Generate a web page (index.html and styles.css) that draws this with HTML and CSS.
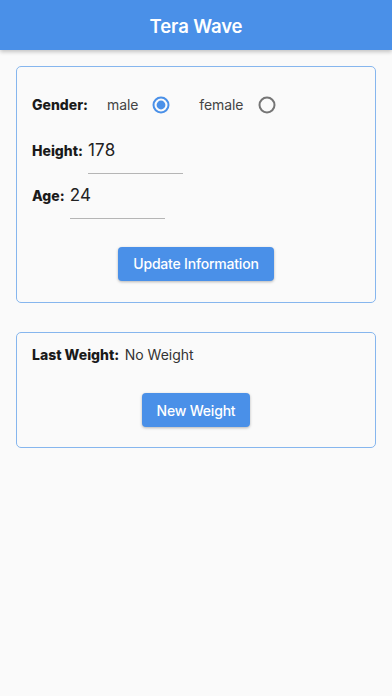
FILE: index.html
```html
<!DOCTYPE html>
<html lang="en">
<head>
<meta charset="utf-8">
<meta name="viewport" content="width=device-width, initial-scale=1">
<title>Tera Wave</title>
<link rel="stylesheet" href="styles.css">
</head>
<body>
  <header class="appbar">
    <h1 class="appbar-title">Tera Wave</h1>
  </header>
  <main class="content">
    <section class="card card-info">
      <div class="gender-row">
        <span class="label">Gender:</span>
        <span class="option-text option-male">male</span>
        <svg class="radio" width="18" height="18" viewBox="0 0 18 18" aria-hidden="true">
          <circle cx="9" cy="9" r="7.5" fill="none" stroke="#4a90e8" stroke-width="2"/>
          <circle cx="9" cy="9" r="4.4" fill="#4a90e8"/>
        </svg>
        <span class="option-text option-female">female</span>
        <svg class="radio" width="18" height="18" viewBox="0 0 18 18" aria-hidden="true">
          <circle cx="9" cy="9" r="7.5" fill="none" stroke="#757575" stroke-width="2"/>
        </svg>
      </div>
      <div class="field-row field-height">
        <span class="label">Height:</span>
        <div class="field">178</div>
      </div>
      <div class="field-row field-age">
        <span class="label">Age:</span>
        <div class="field">24</div>
      </div>
      <div class="btn-wrap btn-wrap-info">
        <button class="btn" type="button">Update Information</button>
      </div>
    </section>

    <section class="card card-weight">
      <div class="weight-row">
        <span class="label">Last Weight:</span>
        <span class="weight-value">No Weight</span>
      </div>
      <div class="btn-wrap btn-wrap-weight">
        <button class="btn" type="button">New Weight</button>
      </div>
    </section>
  </main>
</body>
</html>
```

FILE: styles.css
```css
* {
  box-sizing: border-box;
}

html, body {
  margin: 0;
  padding: 0;
}

body {
  background: #fafafa;
  font-family: Inter, "Noto Sans", "Liberation Sans", sans-serif;
  color: #1c1c1c;
  width: 392px;
  min-height: 696px;
}

.appbar {
  height: 50px;
  background: #4a90e8;
  display: flex;
  align-items: center;
  justify-content: center;
  box-shadow: 0 2px 4px rgba(0, 0, 0, 0.22);
  position: relative;
  z-index: 1;
}

.appbar-title {
  margin: 0;
  color: #ffffff;
  font-size: 18.5px;
  font-weight: 600;
  letter-spacing: -0.1px;
  line-height: 24px;
  padding-top: 2px;
}

.content {
  padding: 16px 16px 0 16px;
  display: flex;
  flex-direction: column;
  gap: 29.5px;
}

.card {
  border: 1.5px solid #86b6ee;
  border-radius: 5px;
  padding: 0 15px;
}

.card-info {
  padding-top: 13.5px;
  padding-bottom: 21px;
}

.card-weight {
  padding-top: 11px;
  padding-bottom: 19.5px;
}

.label {
  font-size: 14px;
  font-weight: 800;
  color: #1a1a1a;
  line-height: 20px;
}

.gender-row {
  height: 48px;
  display: flex;
  align-items: center;
}

.option-text {
  font-size: 14px;
  color: #444444;
  letter-spacing: -0.1px;
}

.option-male {
  margin-left: 19px;
  margin-right: 14px;
}

.option-female {
  margin-left: 29px;
  margin-right: 15px;
}

.radio {
  display: block;
  flex: none;
}

.field-row {
  display: flex;
  align-items: baseline;
  margin-top: 8px;
}

.field-row .label {
  margin-right: 5px;
}

.field {
  width: 95px;
  height: 37px;
  font-size: 17px;
  line-height: 26px;
  color: #222222;
  border-bottom: 1px solid #b5b5b5;
  letter-spacing: 0.2px;
}

.btn-wrap {
  display: flex;
  justify-content: center;
}

.btn-wrap-info {
  margin-top: 28px;
}

.btn-wrap-weight {
  margin-top: 28px;
}

.btn {
  height: 34px;
  padding: 0 15px;
  border: none;
  border-radius: 4px;
  background: #4a90e8;
  color: #ffffff;
  font-family: Inter, "Noto Sans", "Liberation Sans", sans-serif;
  font-size: 14px;
  font-weight: 500;
  letter-spacing: -0.2px;
  box-shadow: 0 1px 3px rgba(0, 0, 0, 0.28);
}

.weight-row {
  line-height: 20px;
}

.weight-value {
  font-size: 14px;
  color: #333333;
  margin-left: 1px;
  letter-spacing: 0px;
}
```
